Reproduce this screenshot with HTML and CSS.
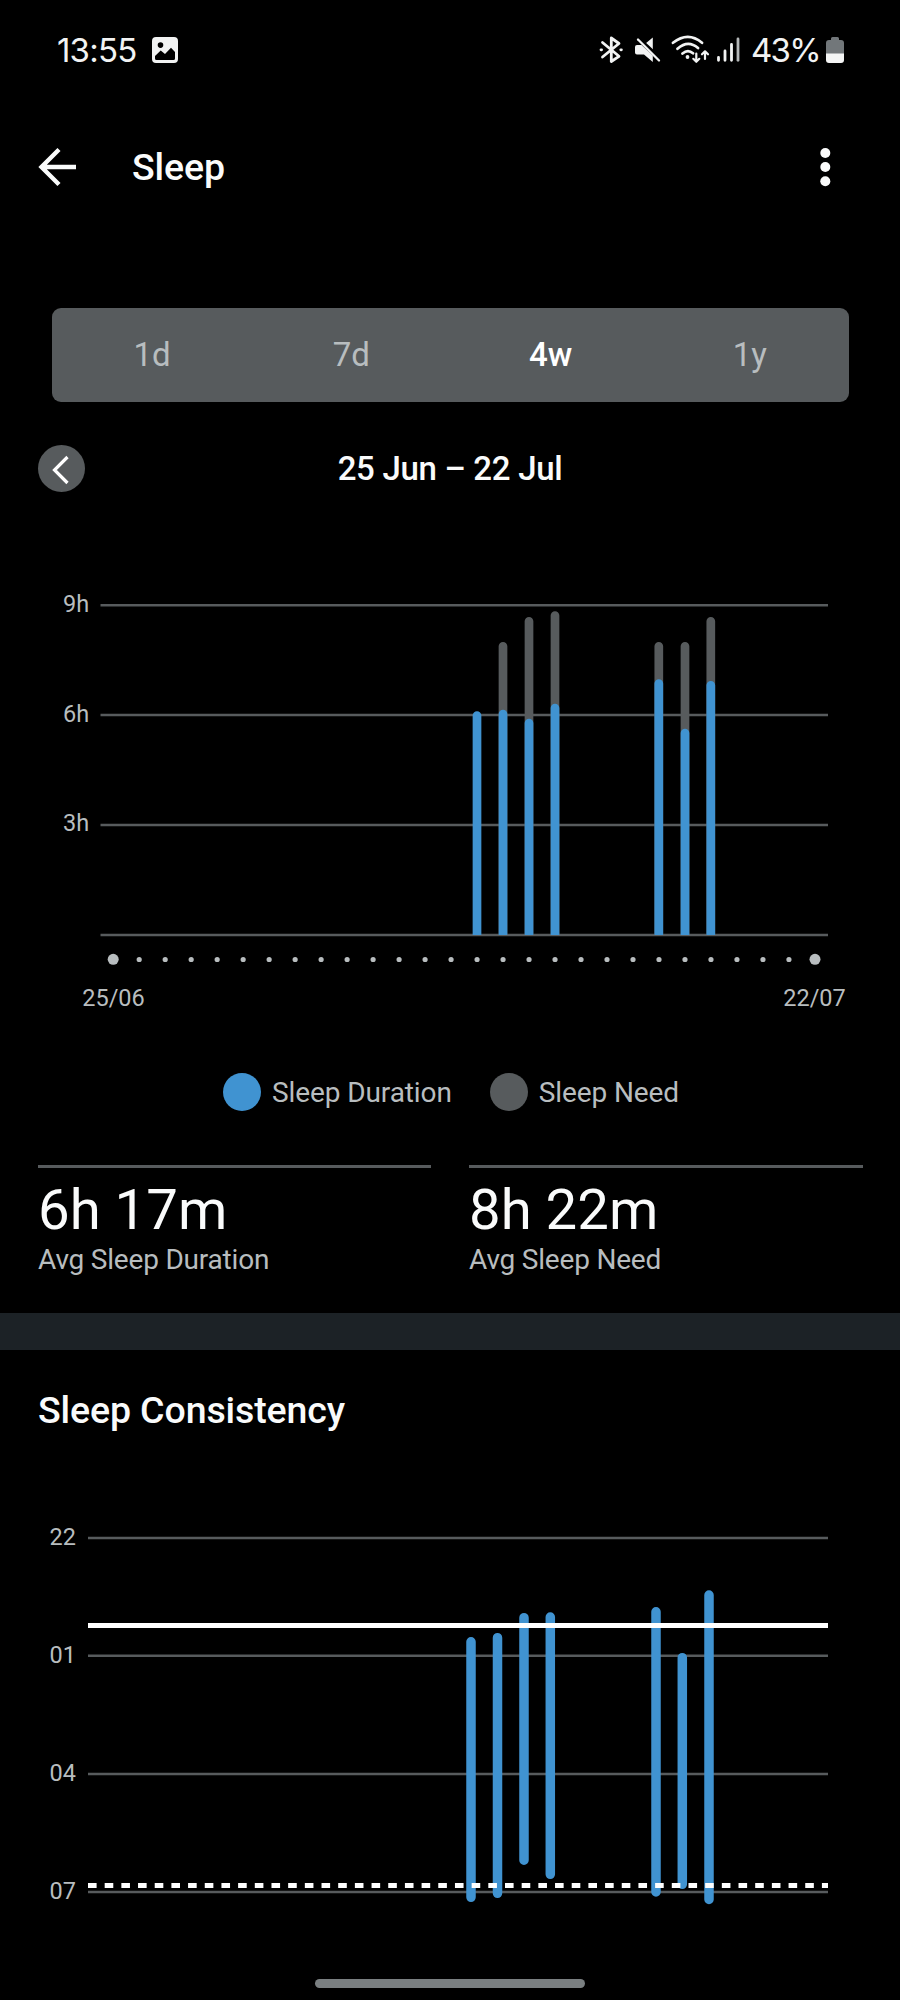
FILE: index.html
```html
<!DOCTYPE html>
<html lang="en">
<head>
  <meta charset="UTF-8" />
  <meta name="viewport" content="width=device-width, initial-scale=1.0"/>
  <title>Sleep</title>
  <link rel="stylesheet" href="styles.css">
</head>
<body>
  <div class="status-bar">
    <span class="clock">13:55</span>
    <svg class="icon-photo" width="26" height="26" viewBox="0 0 26 26">
      <path fill="#f2f3f3" fill-rule="evenodd" d="M4 0h18a4 4 0 0 1 4 4v18a4 4 0 0 1-4 4H4a4 4 0 0 1-4-4V4a4 4 0 0 1 4-4zM3 19v2.500q0 1.500 1.500 1.500h17q1.500 0 1.500-1.500V15l-4-4.200L13 17l-4.300-3.500zM8.500 5.300a2.800 2.800 0 1 0 0 5.600 2.800 2.800 0 0 0 0-5.600z"/>
    </svg>
    <div class="status-icons">
      <svg width="146" height="36" viewBox="596 32 146 36" fill="none" stroke="#f2f3f3" stroke-linecap="round" stroke-linejoin="round">
        <!-- bluetooth -->
        <path stroke-width="2.800" d="M602.500 42.500L619 56.300L611.300 61.500V38L619 43.500L602.500 57"/>
        <path stroke-width="2.800" d="M601 49.800h.6M620.800 49.800h.6"/>
        <!-- muted -->
        <path fill="#f2f3f3" stroke="none" d="M645.500 43.500L652.800 37.500V51zM637 45h4.500l11.300 10.500v6.500L644 54.500h-7q-2 0-2-2V47q0-2 2-2z"/>
        <path stroke="#000" stroke-width="2" stroke-linecap="butt" d="M641.500 40L656 53.500"/>
        <path stroke-width="2.300" d="M638 39.500L659 60.500"/>
        <!-- wifi -->
        <path stroke-width="2.700" d="M673 42.800Q688 31 702 42.800M677.500 48.800Q688 39.300 698 48M682.500 53.500Q688 48.800 693 53.300"/>
        <circle cx="687.500" cy="57" r="1.900" fill="#f2f3f3" stroke="none"/>
        <path stroke-width="2.200" d="M696.300 53.500v8M693.300 58.800l3 3 3-3M705 59v-7.500M702 54.300l3-3 3 3"/>
        <!-- signal -->
        <path stroke-width="2.800" d="M718.500 57.500v2.800M725 51v9.300M731.500 44.500v15.800"/>
        <path stroke-width="2.800" stroke="#b4b7b8" d="M738 39v21.300"/>
      </svg>
      <span class="percent">43%</span>
      <svg width="18" height="27" viewBox="0 0 18 27">
        <path fill="#72777a" d="M5 3V1.500Q5 0 6.500 0h5Q13 0 13 1.500V3h2q3 0 3 3v11H0V6q0-3 3-3z"/>
        <path fill="#f4f5f5" d="M0 16.500h18V23q0 3-3 3H3q-3 0-3-3z"/>
      </svg>
    </div>
  </div>

  <div class="header">
    <svg width="40" height="40" viewBox="0 0 40 40" fill="none" stroke="#fafbfb" stroke-width="4.400">
      <path d="M39 20H4.500M22 2.500L4.500 20L22 37.500"/>
    </svg>
    <h1>Sleep</h1>
    <svg class="more" width="12" height="40" viewBox="0 0 12 40" fill="#fafbfb">
      <circle cx="6.300" cy="6" r="5"/>
      <circle cx="6.300" cy="20" r="5"/>
      <circle cx="6.300" cy="34.300" r="5"/>
    </svg>
  </div>

  <div class="tabs">
    <button>1d</button>
    <button>7d</button>
    <button class="active">4w</button>
    <button>1y</button>
  </div>

  <div class="period">
    <button class="prev">
      <svg width="47" height="47" viewBox="0 0 47 47" fill="none" stroke="#fff" stroke-width="3.200">
        <path d="M29.500 12L16.500 25l13 13"/>
      </svg>
    </button>
    <h2>25 Jun – 22 Jul</h2>
  </div>

  <svg class="chart" width="900" height="460" viewBox="0 570 900 460">
    <clipPath id="plot"><rect x="100" y="600" width="728" height="335"/></clipPath>
    <g class="grid">
      <path d="M100.500 605.300H828M100.500 715H828M100.500 825H828M100.500 935H828"/>
    </g>
    <g class="axis">
      <text x="63" y="612">9h</text>
      <text x="63" y="722">6h</text>
      <text x="63" y="831">3h</text>
      <text x="113.500" y="1005.500" text-anchor="middle">25/06</text>
      <text x="814.500" y="1005.500" text-anchor="middle">22/07</text>
    </g>
    <g clip-path="url(#plot)">
      <path class="need" d="M503 945V646.300M529 945V621.300M555 945V615.500M658.800 945V646.300M685 945V646.300M710.800 945V621.300"/>
      <path class="duration" d="M477 945V715.500M503 945V714M529 945V723M555 945V708M658.800 945V683.500M685 945V733M710.800 945V685.300"/>
    </g>
    <path class="days" d="M139.200 959.500H790"/>
    <circle class="day-end" cx="113.200" cy="959.300" r="5.500"/>
    <circle class="day-end" cx="815" cy="959.300" r="5.500"/>
  </svg>

  <div class="legend">
    <span class="dot blue"></span><span class="name">Sleep Duration</span>
    <span class="dot gray"></span><span class="name">Sleep Need</span>
  </div>

  <div class="stats">
    <div class="stat">
      <div class="value">6h 17m</div>
      <div class="label">Avg Sleep Duration</div>
    </div>
    <div class="stat">
      <div class="value">8h 22m</div>
      <div class="label">Avg Sleep Need</div>
    </div>
  </div>

  <div class="consistency">
    <h1>Sleep Consistency</h1>
    <svg class="chart" width="900" height="440" viewBox="0 1500 900 440">
      <g class="grid">
        <path d="M88 1538H828M88 1655.800H828M88 1774H828M88 1892H828"/>
      </g>
      <g class="axis">
        <text x="49.500" y="1544.500">22</text>
        <text x="49.500" y="1663">01</text>
        <text x="49.500" y="1780.500">04</text>
        <text x="49.500" y="1898.500">07</text>
      </g>
      <path class="nights" d="M471 1641.800V1897.300M497.500 1637.700V1893.300M524 1617.700V1860.200M550.300 1617V1874.300M656 1611.800V1892M682.300 1657.700V1884.300M709 1595V1899.500"/>
      <path class="bedtime" d="M88 1625.500H828"/>
      <path class="waketime" d="M88 1885.500H828"/>
    </svg>
  </div>

  <div class="nav-handle"></div>
</body>
</html>
```
FILE: styles.css
```css
* {
  margin: 0;
  padding: 0;
  box-sizing: border-box;
}

body {
  background-color: #000;
  color: #fafbfb;
  font-family: Roboto, sans-serif;
  width: 900px;
  height: 2000px;
  overflow: hidden;
  display: flex;
  flex-direction: column;
}

svg {
  display: block;
  flex-shrink: 0;
}

button {
  background: none;
  border: none;
  font-family: inherit;
}

.status-bar {
  height: 100px;
  display: flex;
  align-items: center;
  padding: 0 56px 0 57px;
}

.clock,
.percent {
  font-family: Inter, Roboto, sans-serif;
  font-size: 33px;
  line-height: 38px;
  padding-bottom: 1px;
  color: #f2f3f3;
}

.clock {
  width: 82px;
  letter-spacing: -0.8px;
}

.icon-photo {
  margin-left: 13px;
}

.status-icons {
  margin-left: auto;
  display: flex;
  align-items: center;
}

.percent {
  width: 77px;
  margin-left: 9px;
  letter-spacing: -1.7px;
}

.status-icons svg:last-child {
  margin-left: -2px;
}

.header {
  height: 134px;
  display: flex;
  align-items: center;
  padding: 0 69px 0 37px;
}

h1 {
  font-size: 37.5px;
  font-weight: 500;
  line-height: 44px;
  letter-spacing: -0.12px;
}

.header h1 {
  margin-left: 55px;
}

.more {
  margin-left: auto;
}

.tabs {
  height: 94px;
  margin: 74px 51px 0 52px;
  background-color: #575b5d;
  border-radius: 9px;
  display: grid;
  grid-template-columns: repeat(4, 1fr);
}

.tabs button {
  font-size: 33px;
  color: #b8bdbf;
  padding: 0 0 1px 1px;
}

.tabs .active {
  color: #fff;
  font-weight: 500;
}

.period {
  height: 47px;
  margin: 43px 38px 0;
  display: grid;
  grid-template-columns: 47px 1fr 47px;
  align-items: center;
}

.prev {
  height: 47px;
  border-radius: 50%;
  background-color: #575b5d;
}

.period h2 {
  font-size: 33px;
  font-weight: 500;
  line-height: 40px;
  letter-spacing: -0.3px;
  text-align: center;
}

.chart {
  margin-top: 78px;
}

.grid {
  stroke: #575b5d;
  stroke-width: 2.4px;
}

.axis {
  fill: #b8bdbf;
  font-size: 23.5px;
}

.need,
.duration {
  fill: none;
  stroke-width: 8.7px;
  stroke-linecap: round;
}

.need {
  stroke: #575b5d;
}

.duration {
  stroke: #4093d1;
}

.days {
  stroke: #b8bdbf;
  stroke-width: 5.2px;
  stroke-linecap: round;
  stroke-dasharray: 0 25.99;
}

.day-end {
  fill: #b8bdbf;
}

.legend {
  height: 38px;
  margin: 43px 0 0 223px;
  display: flex;
  align-items: center;
  font-size: 28px;
  line-height: 34px;
  letter-spacing: -0.1px;
  color: #b8bdbf;
}

.name {
  padding-top: 2px;
}

.dot {
  width: 38px;
  height: 38px;
  border-radius: 50%;
  margin-right: 11px;
}

.blue {
  background-color: #4093d1;
}

.gray {
  background-color: #575b5d;
  margin-left: 38px;
}

.stats {
  display: grid;
  grid-template-columns: 393px 394px;
  gap: 38px;
  margin: 54px 37px 0 38px;
  height: 148px;
}

.stat {
  border-top: 3px solid #575b5d;
}

.value {
  font-size: 56.3px;
  line-height: 66px;
  margin-top: 9px;
}

.label {
  font-size: 28px;
  line-height: 34px;
  letter-spacing: -0.2px;
  color: #b8bdbf;
}

.consistency {
  border-top: 37px solid #1c2226;
}

.consistency h1 {
  margin: 38px 0 0 38px;
}

.consistency .chart {
  margin-top: 68px;
}

.nights {
  stroke: #4093d1;
  stroke-width: 9.5px;
  stroke-linecap: round;
}

.bedtime,
.waketime {
  stroke: #fff;
  stroke-width: 4.8px;
}

.waketime {
  stroke-dasharray: 8.6 8.08;
}

.nav-handle {
  width: 270px;
  height: 9px;
  margin: 39px auto 0;
  border-radius: 5px;
  background-color: #7a7f81;
}
```
